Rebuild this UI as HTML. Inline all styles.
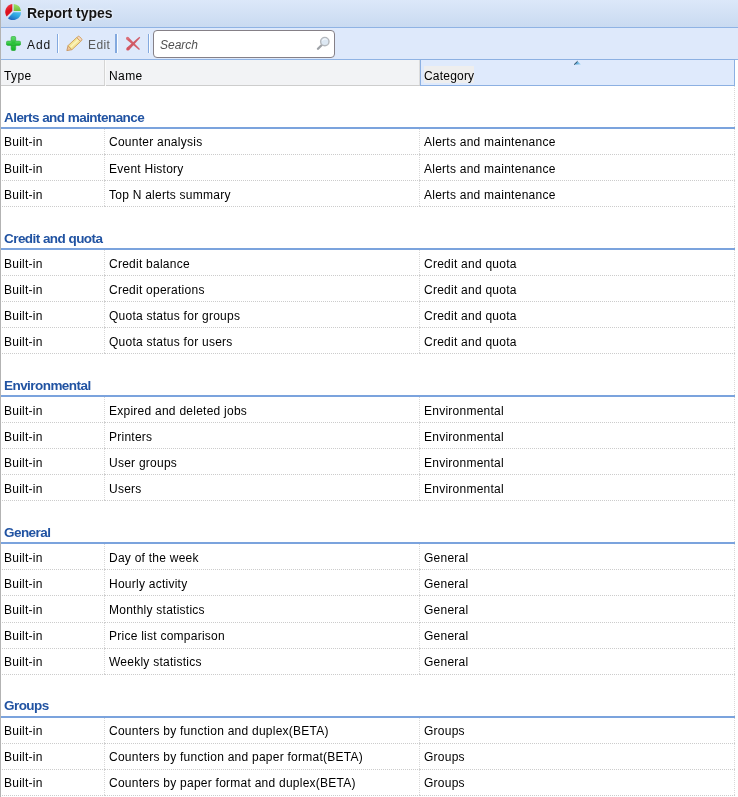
<!DOCTYPE html>
<html><head><meta charset="utf-8">
<style>
*{margin:0;padding:0;box-sizing:border-box}
html,body{width:738px;height:797px;overflow:hidden;background:#fff}
body{position:relative;will-change:transform;font-family:"Liberation Sans",sans-serif;font-size:12px;color:#000}
.abs{position:absolute}
#lb{position:absolute;left:0;top:0;width:1px;height:797px;background:#b3b3b3;z-index:5}
#title{position:absolute;left:0;top:0;width:738px;height:27px;background:linear-gradient(#dce8f9,#c9daf1)}
#title .t{position:absolute;left:27px;top:5px;font-size:14px;font-weight:bold;color:#141414;line-height:16px;text-shadow:0 0 2px #f4f8ff,0 0 3px #f4f8ff}
#tline{position:absolute;left:0;top:27px;width:738px;height:1px;background:#8fb3e4}
#tb{position:absolute;left:0;top:28px;width:738px;height:31px;background:#dee9fb}
#tbline{position:absolute;left:0;top:59px;width:738px;height:1px;background:#8fb3e4}
.sep{position:absolute;top:34px;width:1px;height:19px;background:#83a9df}
.sepw{position:absolute;top:34px;width:1px;height:19px;background:#fbfdff}
.tbt{position:absolute;top:38px;line-height:14px;font-size:12px;letter-spacing:0.4px}
#search{position:absolute;left:153px;top:30px;width:182px;height:28px;border:1px solid #858087;border-radius:4px;background:#fff}
#search .ph{position:absolute;left:6px;top:7px;font-style:italic;color:#505050;font-size:12px;line-height:14px}
#hdr{position:absolute;left:0;top:60px;width:735px;height:26px;background:#f2f3f5;border-bottom:1px solid #cdcdcd}
#hdr span{position:absolute;top:9px;line-height:14px;letter-spacing:0.4px}
#hsep1{position:absolute;left:104px;top:60px;width:1px;height:25px;background:#d5d5d5}
#hcat{position:absolute;left:420px;top:59px;width:315px;height:27px;border:1px solid #8cb0e2;background:#dfeafc}
#hcat .lab{position:absolute;left:3px;top:6px;width:50px;height:17px;background:#eeeeee}
#hcat .txt{position:absolute;left:3px;top:9px;line-height:14px;letter-spacing:0.2px}
#arrow{position:absolute;left:574px;top:61px;width:8px;height:4px}
.gh{position:absolute;left:0;width:735px;height:43px;border-bottom:2px solid #7ba3dd}
.gh::after{content:"";position:absolute;left:734px;top:0;width:1px;height:41px;background-image:linear-gradient(#d8d8d8 50%,transparent 50%);background-size:1px 2px}
.gh span{position:absolute;left:4px;top:24px;font-weight:bold;color:#2153a2;font-size:13.5px;letter-spacing:-0.55px;line-height:16px}
.r{position:absolute;left:0;width:735px;height:26px}
.c{position:absolute;top:0;height:26px;background-image:linear-gradient(90deg,#cccccc 50%,transparent 50%),linear-gradient(#d8d8d8 50%,transparent 50%);background-size:2px 1px,1px 2px;background-repeat:repeat-x,repeat-y;background-position:0 25px,100% 0}
.first .c span{top:6px}
.tall,.tall .c{height:27px} .tall .c{background-position:0 26px,100% 0}
.c span{position:absolute;left:4px;top:7px;line-height:14px;white-space:nowrap;letter-spacing:0.25px}
.c1{left:0;width:105px} .c2{left:105px;width:315px} .c3{left:420px;width:315px}
</style></head><body>
<div id="title">
 <svg class="abs" style="left:5px;top:4px" width="16" height="16" viewBox="0 0 16 16">
  <defs>
   <linearGradient id="pr" x1="0" y1="0" x2="0.3" y2="1"><stop offset="0" stop-color="#ef4a58"/><stop offset="0.6" stop-color="#e0101c"/><stop offset="1" stop-color="#d8101c"/></linearGradient>
   <linearGradient id="pg" x1="0" y1="0" x2="0" y2="1"><stop offset="0" stop-color="#9fe368"/><stop offset="1" stop-color="#72bd3e"/></linearGradient>
   <linearGradient id="pb" x1="1" y1="0" x2="0.3" y2="1"><stop offset="0" stop-color="#4fc3f2"/><stop offset="0.5" stop-color="#2ea3df"/><stop offset="1" stop-color="#1f66c0"/></linearGradient>
  </defs>
  <path d="M7.3 0.05 L7.3 7.1 L1.7 12.6 A8 8 0 0 1 7.3 0.05 Z" fill="url(#pr)"/>
  <path d="M8.7 0.05 L8.7 6.9 L15.95 6.9 A8 8 0 0 0 8.7 0.05 Z" fill="url(#pg)"/>
  <path d="M16 8.2 L8.4 8.2 L2.9 14.2 A8 8 0 0 0 16 8.2 Z" fill="url(#pb)"/>
 </svg>
 <span class="t">Report types</span>
</div>
<div id="tline"></div>
<div id="tb"></div>
<div id="tbline"></div>
<svg class="abs" style="left:6px;top:36px" width="15" height="15" viewBox="0 0 15 15">
 <defs><linearGradient id="gp" x1="0" y1="0" x2="0" y2="1"><stop offset="0" stop-color="#5ddc6a"/><stop offset="1" stop-color="#13b424"/></linearGradient></defs>
 <rect x="5.1" y="0.3" width="4.6" height="14.4" rx="1.6" fill="url(#gp)" stroke="#2ba838" stroke-width="0.6"/>
 <rect x="0.3" y="5.1" width="14.4" height="4.3" rx="1.6" fill="url(#gp)" stroke="#2ba838" stroke-width="0.6"/>
 <rect x="5.4" y="5.4" width="4" height="3.7" fill="#2cbf3a"/>
</svg>
<span class="tbt" style="left:27px;color:#141414;letter-spacing:0.9px">Add</span>
<div class="sep" style="left:57px"></div><div class="sepw" style="left:58px"></div>
<svg class="abs" style="left:62px;top:32px" width="24" height="22" viewBox="0 0 24 22">
 <g transform="translate(12.0 11.9) rotate(-43)">
  <path d="M-5.6 -2.7 L-9.8 0 L-5.6 2.7 Z" fill="#f0c89c" stroke="#c99865" stroke-width="0.9" stroke-linejoin="round"/>
  <rect x="-5.6" y="-2.8" width="12" height="5.6" fill="#f4e697" stroke="#cfa05c" stroke-width="0.9"/>
  <rect x="-4.6" y="-0.8" width="10.4" height="1.6" fill="#fbf3c0"/>
  <rect x="6.4" y="-2.8" width="2.6" height="5.6" rx="1.4" fill="#f6d9c6" stroke="#cfa05c" stroke-width="0.9"/>
 </g>
</svg>
<span class="tbt" style="left:88px;color:#5a5a5a">Edit</span>
<div class="sep" style="left:115px;width:2px"></div><div class="sepw" style="left:117px"></div>
<svg class="abs" style="left:120px;top:30px" width="26" height="26" viewBox="0 0 26 26">
 <path d="M6.48 9.4 L8.52 7.2 L19.91 19.06 L19.09 19.94 Z" fill="#d3606b"/>
 <circle cx="7.5" cy="8.3" r="1.5" fill="#dc7079"/>
 <path d="M19.38 6.77 L20.22 7.63 L8.92 20.14 L6.68 17.86 Z" fill="#d05a66"/>
 <circle cx="7.8" cy="19" r="1.6" fill="#d5525f"/>
</svg>
<div class="sep" style="left:148px"></div><div class="sepw" style="left:149px"></div>
<div id="search"><span class="ph">Search</span></div>
<svg class="abs" style="left:314px;top:34px" width="16" height="16" viewBox="0 0 16 16">
 <path d="M4 14.8 L7.8 11" stroke="#9ea2a7" stroke-width="2.3" stroke-linecap="round"/>
 <circle cx="10.8" cy="7.6" r="4.2" fill="#dde8f3" stroke="#b4b8bd" stroke-width="1.4"/>
 <path d="M8.6 6.6 A2.6 2.6 0 0 1 12.6 5.6" stroke="#ffffff" stroke-width="0.9" fill="none"/>
</svg>
<div id="hdr"><span style="left:4px">Type</span><span style="left:109px">Name</span></div>
<div id="hsep1"></div><div class="abs" style="left:105px;top:60px;width:1px;height:26px;background:#fafafa"></div><div class="abs" style="left:419px;top:60px;width:1px;height:25px;background:#dcdcdc"></div>
<div id="hcat"><div class="lab"></div><span class="txt">Category</span></div>
<svg class="abs" style="left:572px;top:59px" width="12" height="8" viewBox="0 0 12 8"><defs><linearGradient id="ga" x1="0" y1="0" x2="1" y2="0"><stop offset="0" stop-color="#2a86c0"/><stop offset="1" stop-color="#a8dcf6"/></linearGradient></defs><path d="M2 5.6 L5.5 2.3 L9 5.6 Z" fill="url(#ga)"/><path d="M2.1 5.6 L5.5 2.3" stroke="#35495a" stroke-width="1"/></svg>
<div class="gh" style="top:86px"><span>Alerts and maintenance</span></div>
<div class="r first" style="top:129px"><div class="c c1"><span>Built-in</span></div><div class="c c2"><span>Counter analysis</span></div><div class="c c3"><span>Alerts and maintenance</span></div></div>
<div class="r" style="top:155px"><div class="c c1"><span>Built-in</span></div><div class="c c2"><span>Event History</span></div><div class="c c3"><span>Alerts and maintenance</span></div></div>
<div class="r" style="top:181px"><div class="c c1"><span>Built-in</span></div><div class="c c2"><span>Top N alerts summary</span></div><div class="c c3"><span>Alerts and maintenance</span></div></div>
<div class="gh" style="top:207px"><span>Credit and quota</span></div>
<div class="r" style="top:250px"><div class="c c1"><span>Built-in</span></div><div class="c c2"><span>Credit balance</span></div><div class="c c3"><span>Credit and quota</span></div></div>
<div class="r" style="top:276px"><div class="c c1"><span>Built-in</span></div><div class="c c2"><span>Credit operations</span></div><div class="c c3"><span>Credit and quota</span></div></div>
<div class="r" style="top:302px"><div class="c c1"><span>Built-in</span></div><div class="c c2"><span>Quota status for groups</span></div><div class="c c3"><span>Credit and quota</span></div></div>
<div class="r" style="top:328px"><div class="c c1"><span>Built-in</span></div><div class="c c2"><span>Quota status for users</span></div><div class="c c3"><span>Credit and quota</span></div></div>
<div class="gh" style="top:354px"><span>Environmental</span></div>
<div class="r" style="top:397px"><div class="c c1"><span>Built-in</span></div><div class="c c2"><span>Expired and deleted jobs</span></div><div class="c c3"><span>Environmental</span></div></div>
<div class="r" style="top:423px"><div class="c c1"><span>Built-in</span></div><div class="c c2"><span>Printers</span></div><div class="c c3"><span>Environmental</span></div></div>
<div class="r" style="top:449px"><div class="c c1"><span>Built-in</span></div><div class="c c2"><span>User groups</span></div><div class="c c3"><span>Environmental</span></div></div>
<div class="r" style="top:475px"><div class="c c1"><span>Built-in</span></div><div class="c c2"><span>Users</span></div><div class="c c3"><span>Environmental</span></div></div>
<div class="gh" style="top:501px"><span>General</span></div>
<div class="r" style="top:544px"><div class="c c1"><span>Built-in</span></div><div class="c c2"><span>Day of the week</span></div><div class="c c3"><span>General</span></div></div>
<div class="r" style="top:570px"><div class="c c1"><span>Built-in</span></div><div class="c c2"><span>Hourly activity</span></div><div class="c c3"><span>General</span></div></div>
<div class="r tall" style="top:596px"><div class="c c1"><span>Built-in</span></div><div class="c c2"><span>Monthly statistics</span></div><div class="c c3"><span>General</span></div></div>
<div class="r first" style="top:623px"><div class="c c1"><span>Built-in</span></div><div class="c c2"><span>Price list comparison</span></div><div class="c c3"><span>General</span></div></div>
<div class="r first" style="top:649px"><div class="c c1"><span>Built-in</span></div><div class="c c2"><span>Weekly statistics</span></div><div class="c c3"><span>General</span></div></div>
<div class="gh" style="top:675px"><span style="top:23px">Groups</span></div>
<div class="r first" style="top:718px"><div class="c c1"><span>Built-in</span></div><div class="c c2"><span>Counters by function and duplex(BETA)</span></div><div class="c c3"><span>Groups</span></div></div>
<div class="r first" style="top:744px"><div class="c c1"><span>Built-in</span></div><div class="c c2"><span>Counters by function and paper format(BETA)</span></div><div class="c c3"><span>Groups</span></div></div>
<div class="r first" style="top:770px"><div class="c c1"><span>Built-in</span></div><div class="c c2"><span>Counters by paper format and duplex(BETA)</span></div><div class="c c3"><span>Groups</span></div></div>
<div id="lb"></div>
</body></html>
